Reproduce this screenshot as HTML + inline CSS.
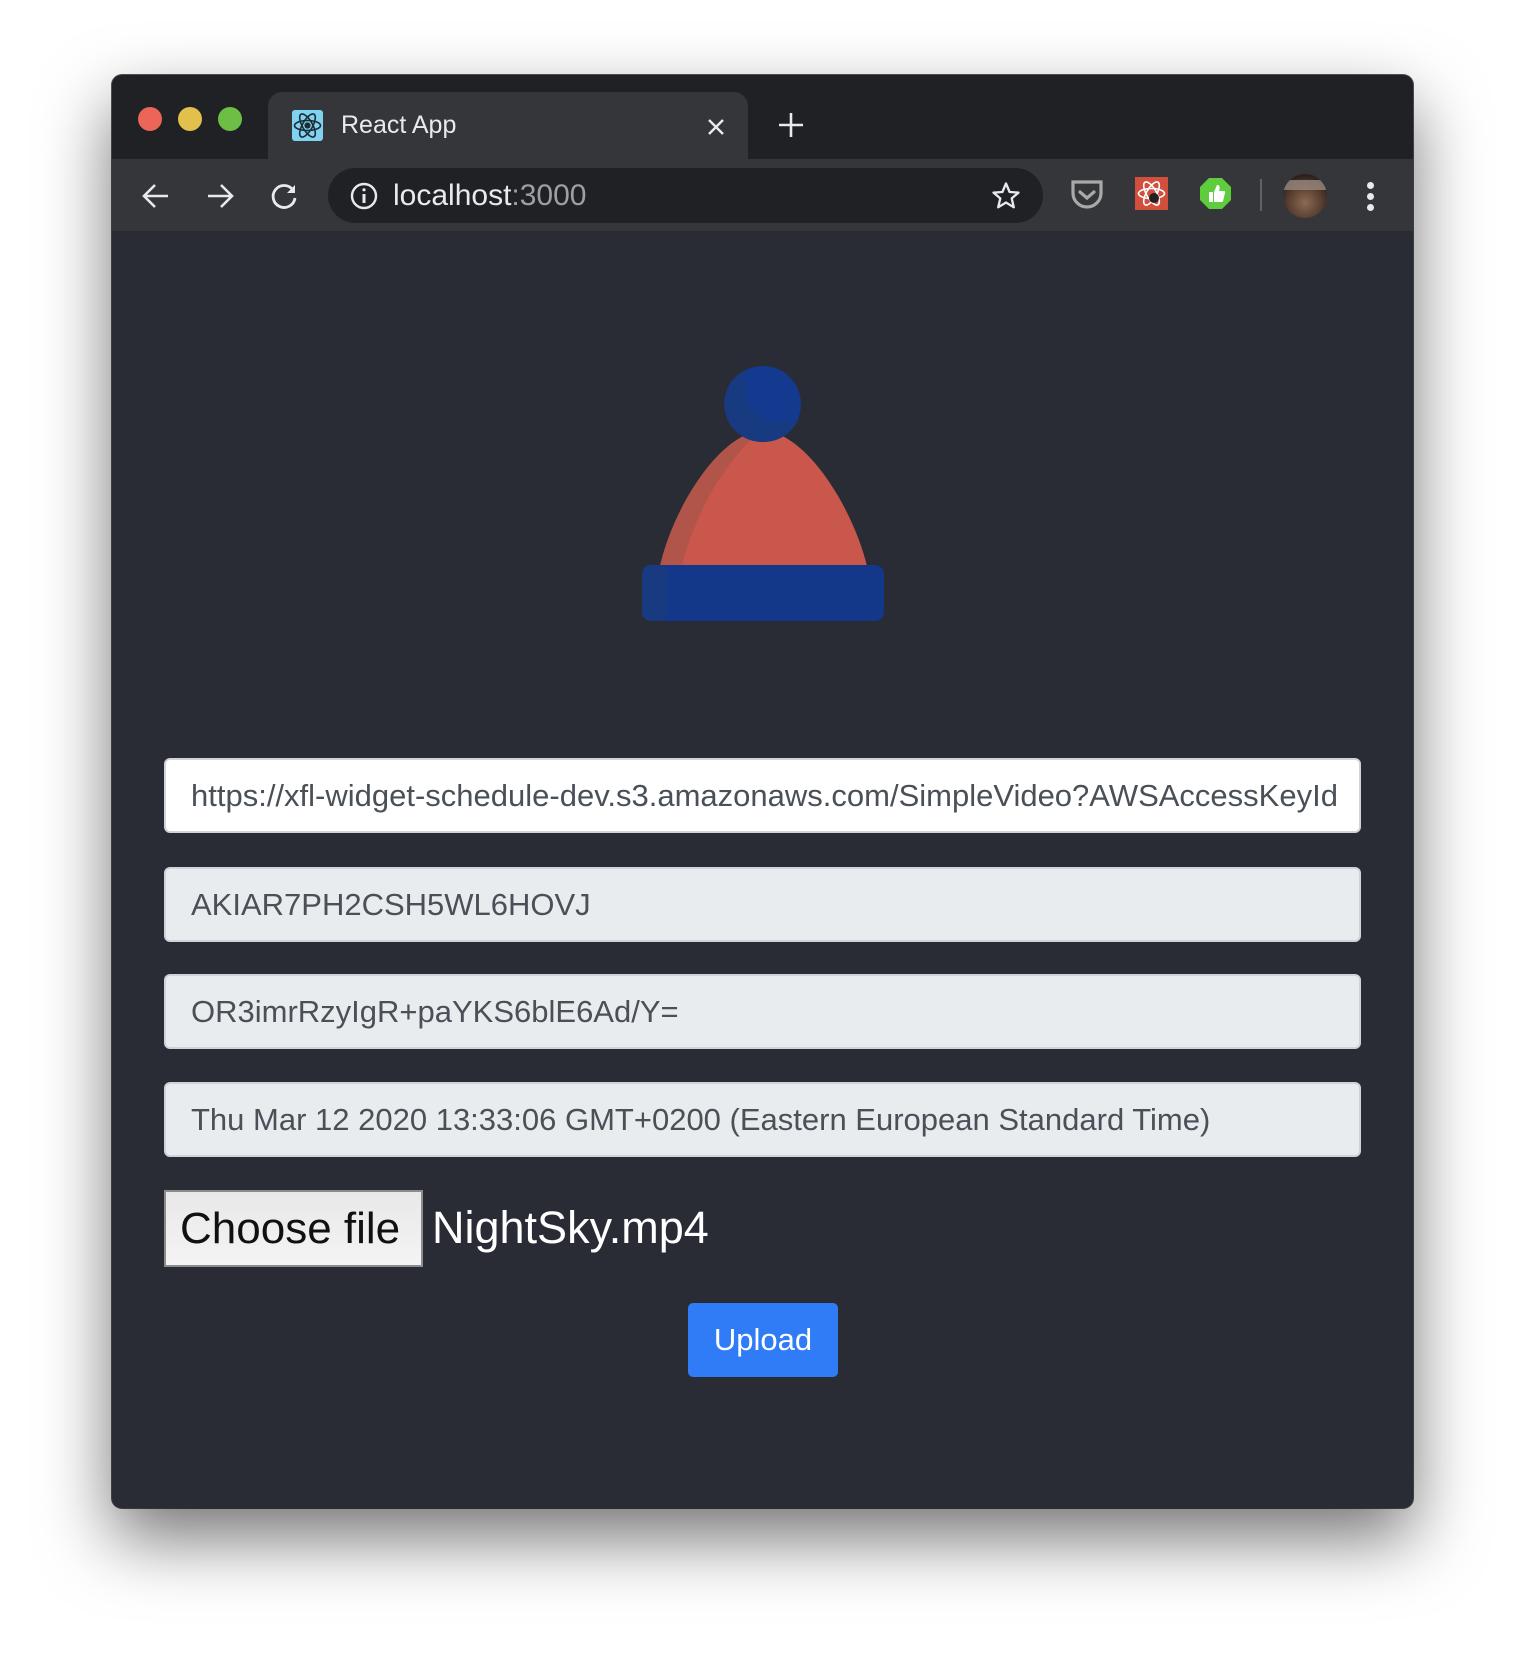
<!DOCTYPE html>
<html><head><meta charset="utf-8"><style>
*{margin:0;padding:0;box-sizing:border-box}
body{width:1526px;height:1656px;background:#fff;position:relative;overflow:hidden;font-family:"Liberation Sans",sans-serif}
.win{position:absolute;left:112px;top:75px;width:1301px;height:1433px;border-radius:10px;background:#292c35;overflow:hidden;box-shadow:0 30px 70px rgba(0,0,0,.55),0 0 0 1px #555}
.tabbar{position:absolute;left:0;top:0;right:0;height:84px;background:#202124}
.dot{position:absolute;width:24px;height:24px;border-radius:50%;top:32px}
.tab{position:absolute;left:156px;top:17px;width:480px;height:70px;background:#35363a;border-radius:14px 14px 0 0}
.toolbar{position:absolute;left:0;top:84px;right:0;height:73px;background:#35363a;border-bottom:1px solid #2a2b2f}
.omni{position:absolute;left:216px;top:9px;width:715px;height:55px;border-radius:28px;background:#202124}
.inp{position:absolute;left:52px;width:1197px;height:75px;border:2px solid #ced4da;border-radius:6px;background:#e9ecef;color:#495057;font-size:31px;padding-left:25px;line-height:71px;white-space:nowrap;overflow:hidden}
.inp span{display:block;overflow:hidden}
svg{position:absolute}
</style></head><body>
<div class="win">
 <div class="tabbar">
  <div class="dot" style="left:26px;background:#ec6559"></div>
  <div class="dot" style="left:66px;background:#e1c04b"></div>
  <div class="dot" style="left:106px;background:#6cbe45"></div>
  <div class="tab">
   <div style="position:absolute;left:24px;top:18px;width:31px;height:31px;background:#7fd3f0;border-radius:3px"></div>
   <svg style="left:24px;top:18px" width="31" height="31" viewBox="0 0 31 31" fill="none" stroke="#1d2b33" stroke-width="1.6"><ellipse cx="15.5" cy="15.5" rx="13" ry="5"/><ellipse cx="15.5" cy="15.5" rx="13" ry="5" transform="rotate(60 15.5 15.5)"/><ellipse cx="15.5" cy="15.5" rx="13" ry="5" transform="rotate(-60 15.5 15.5)"/><circle cx="15.5" cy="15.5" r="2.3" fill="#1d2b33"/></svg>
   <div style="position:absolute;left:73px;top:19px;color:#e8eaed;font-size:25px">React App</div>
   <svg style="left:439px;top:26px" width="18" height="18" viewBox="0 0 18 18" stroke="#e8eaed" stroke-width="2.4"><path d="M2 2L16 16M16 2L2 16"/></svg>
  </div>
  <svg style="left:666px;top:37px" width="26" height="26" viewBox="0 0 26 26" stroke="#e8eaed" stroke-width="2.6"><path d="M13 1V25M1 13H25"/></svg>
 </div>
 <div class="toolbar">
  <svg style="left:30px;top:24px" width="28" height="26" viewBox="0 0 28 26" fill="none" stroke="#e8eaed" stroke-width="2.6"><path d="M26 13H3M13 2L2 13L13 24"/></svg>
  <svg style="left:94px;top:24px" width="28" height="26" viewBox="0 0 28 26" fill="none" stroke="#e8eaed" stroke-width="2.6"><path d="M2 13H25M15 2L26 13L15 24"/></svg>
  <svg style="left:157px;top:22px" width="30" height="30" viewBox="0 0 30 30" fill="none" stroke="#e8eaed" stroke-width="2.8"><path d="M24 9A11 11 0 1 0 26 17"/><path d="M26 4V12H18Z" fill="#e8eaed" stroke="none"/></svg>
  <div class="omni">
   <svg style="left:22px;top:14px" width="28" height="28" viewBox="0 0 28 28" fill="none" stroke="#e8eaed" stroke-width="2.4"><circle cx="14" cy="14" r="12"/><path d="M14 12V21" stroke-width="3"/><circle cx="14" cy="7.8" r="1.6" fill="#e8eaed" stroke="none"/></svg>
   <div style="position:absolute;left:65px;top:11px;font-size:30px;color:#e8eaed">localhost<span style="color:#9aa0a6">:3000</span></div>
   <svg style="left:663px;top:13px" width="30" height="30" viewBox="0 0 30 30" fill="none" stroke="#e8eaed" stroke-width="2.3" stroke-linejoin="round"><path d="M15 2.5L18.6 11L27.5 11.6L20.7 17.4L22.8 26.3L15 21.5L7.2 26.3L9.3 17.4L2.5 11.6L11.4 11Z"/></svg>
  </div>
  <svg style="left:958px;top:20px" width="34" height="32" viewBox="0 0 34 32" fill="none" stroke="#a9a9a9" stroke-width="3.2"><path d="M3 3H31V14A14 14 0 0 1 3 14Z"/><path d="M10 13L17 19L24 13" stroke-linecap="round"/></svg>
  <div style="position:absolute;left:1023px;top:18px;width:33px;height:33px;background:#d24f3e"></div>
  <svg style="left:1023px;top:18px" width="33" height="33" viewBox="0 0 33 33" fill="none" stroke="#fff" stroke-width="1.6"><ellipse cx="16.5" cy="16.5" rx="13" ry="5"/><ellipse cx="16.5" cy="16.5" rx="13" ry="5" transform="rotate(60 16.5 16.5)"/><ellipse cx="16.5" cy="16.5" rx="13" ry="5" transform="rotate(-60 16.5 16.5)"/><circle cx="19" cy="21" r="5" fill="#222" stroke="none"/></svg>
  <svg style="left:1087px;top:18px" width="33" height="33" viewBox="0 0 33 33"><path d="M10 1H23L32 10V23L23 32H10L1 23V10Z" fill="#5fcc3d"/><path d="M10 15H14V25H10ZM15 15L18 8C20 8 21 9 20.5 12L20 14H25C26 14 26.5 15 26 16L24 24C23.8 25 23 25 22 25H15Z" fill="#fff"/></svg>
  <div style="position:absolute;left:1148px;top:20px;width:2px;height:32px;background:#5f6368"></div>
  <div style="position:absolute;left:1171px;top:15px;width:44px;height:44px;border-radius:50%;background:radial-gradient(circle at 50% 65%,#8a6a55 0,#5a4030 45%,#2b211c 75%);overflow:hidden"><div style="position:absolute;left:0;top:6px;width:44px;height:10px;background:#9a8a80;opacity:.8"></div></div>
  <div style="position:absolute;left:1255px;top:23px;width:7px;height:7px;border-radius:50%;background:#e8eaed;box-shadow:0 11px 0 #e8eaed,0 22px 0 #e8eaed"></div>
 </div>
 <svg style="left:530px;top:280px" width="242" height="267" viewBox="530 280 242 267">
  <path d="M548 491C562 430 610 356 651 356C692 356 740 430 755 491Z" fill="#c9574c"/>
  <path d="M548 491C562 430 610 356 651 356C640 360 590 410 570 491Z" fill="#b1554b"/>
  <circle cx="651" cy="329" r="38" fill="#133a8f"/>
  <path d="M638 293A38 38 0 0 0 651 367A38 38 0 0 0 687 343A36 36 0 0 1 638 293Z" fill="#173a80"/>
  <rect x="530" y="490" width="242" height="56" rx="9" fill="#133789"/>
  <rect x="530" y="490" width="26" height="56" rx="9" fill="#173a80"/>
 </svg>
 <div class="inp" style="top:683px;background:#fff;padding-right:22px"><span>https://xfl-widget-schedule-dev.s3.amazonaws.com/SimpleVideo?AWSAccessKeyId=AKIAR7PH2CSH5WL6HOVJ</span></div>
 <div class="inp" style="top:792px">AKIAR7PH2CSH5WL6HOVJ</div>
 <div class="inp" style="top:899px">OR3imrRzyIgR+paYKS6blE6Ad/Y=</div>
 <div class="inp" style="top:1007px">Thu Mar 12 2020 13:33:06 GMT+0200 (Eastern European Standard Time)</div>
 <div style="position:absolute;left:52px;top:1115px;width:259px;height:77px;border:2px solid #8c8c8c;background:linear-gradient(#e8e8e8,#f4f4f4);font-size:44px;color:#111;line-height:73px;padding-left:14px;white-space:nowrap">Choose file</div>
 <div style="position:absolute;left:320px;top:1115px;font-size:45px;color:#fff;line-height:75px">NightSky.mp4</div>
 <div style="position:absolute;left:576px;top:1228px;width:150px;height:74px;border-radius:5px;background:#2f7cf6;color:#fff;font-size:31px;text-align:center;line-height:74px">Upload</div>
</div>
</body></html>
